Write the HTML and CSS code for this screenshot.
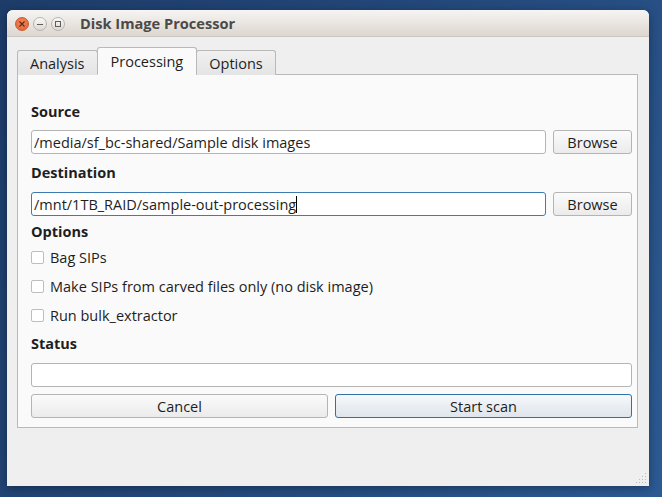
FILE: index.html
```html
<!DOCTYPE html>
<html>
<head>
<meta charset="utf-8">
<link rel="stylesheet" href="styles.css">
</head>
<body>
<div class="window">
  <div class="titlebar">
    <div class="wbtns">
      <span class="wbtn close"><svg width="14" height="14" viewBox="0 0 14 14"><path d="M4.5 4.5 L9.5 9.5 M9.5 4.5 L4.5 9.5" stroke="#5a2a18" stroke-width="1.2" fill="none"/></svg></span>
      <span class="wbtn"><svg width="14" height="14" viewBox="0 0 14 14"><path d="M4 7.5 H10" stroke="#5d5d5d" stroke-width="1" fill="none"/></svg></span>
      <span class="wbtn"><svg width="14" height="14" viewBox="0 0 14 14"><rect x="4.5" y="4.5" width="5" height="5" stroke="#5d5d5d" stroke-width="1" fill="none"/></svg></span>
    </div>
    <div class="title">Disk Image Processor</div>
  </div>
  <div class="body">
    <div class="tabs">
      <div class="tab">Analysis</div>
      <div class="tab active">Processing</div>
      <div class="tab">Options</div>
    </div>
    <div class="pane">
      <div class="label">Source</div>
      <div class="row">
        <div class="field">/media/sf_bc-shared/Sample disk images</div>
        <div class="btn browse">Browse</div>
      </div>
      <div class="label l2">Destination</div>
      <div class="row r2">
        <div class="field focus">/mnt/1TB_RAID/sample-out-processing<span class="caret"></span></div>
        <div class="btn browse">Browse</div>
      </div>
      <div class="label l3">Options</div>
      <div class="check"><span class="box"></span>Bag SIPs</div>
      <div class="check"><span class="box"></span>Make SIPs from carved files only (no disk image)</div>
      <div class="check"><span class="box"></span>Run bulk_extractor</div>
      <div class="label l4">Status</div>
      <div class="field status"></div>
      <div class="btnrow">
        <div class="btn">Cancel</div>
        <div class="btn primary">Start scan</div>
      </div>
    </div>
    <div class="grip">
      <svg width="10" height="10" viewBox="0 0 10 10" fill="#b9b9b9">
        <rect x="9" y="0" width="1" height="1"/>
        <rect x="6" y="3" width="1" height="1"/><rect x="9" y="3" width="1" height="1"/>
        <rect x="3" y="6" width="1" height="1"/><rect x="6" y="6" width="1" height="1"/><rect x="9" y="6" width="1" height="1"/>
        <rect x="0" y="9" width="1" height="1"/><rect x="3" y="9" width="1" height="1"/><rect x="6" y="9" width="1" height="1"/><rect x="9" y="9" width="1" height="1"/>
      </svg>
    </div>
  </div>
</div>
</body>
</html>
```
FILE: styles.css
```css
html, body {
  margin: 0;
  padding: 0;
  height: 100%;
}
body {
  background: linear-gradient(120deg, #1d3c69 0%, #24497c 50%, #2c5a93 100%);
  font-family: "Open Sans", "DejaVu Sans", sans-serif;
  font-size: 14.5px;
  color: #1e1e1e;
  overflow: hidden;
}
.window {
  margin: 10px 0 0 7px;
  width: 642px;
  height: 476px;
  display: flex;
  flex-direction: column;
  border-radius: 6px 6px 0 0;
  box-shadow: 0 2px 10px rgba(0,0,0,0.35);
  background: #efefef;
}
.titlebar {
  height: 27px;
  flex: none;
  display: flex;
  align-items: center;
  border-radius: 6px 6px 0 0;
  background: linear-gradient(#f6f5f3, #ddd6d0);
  border-bottom: 1px solid #cfc8c2;
  box-sizing: border-box;
}
.wbtns {
  display: flex;
  gap: 4px;
  padding-left: 8px;
  padding-top: 1px;
}
.wbtn {
  width: 14px;
  height: 14px;
  border-radius: 50%;
  box-sizing: border-box;
  border: 1px solid #b8b3ae;
  background: linear-gradient(#fbfaf9, #dcd7d2);
  display: flex;
}
.wbtn svg { display: block; margin: -1px; }
.wbtn.close {
  border-color: #c85a36;
  background: radial-gradient(circle at 50% 40%, #f68a5c, #e45c2e);
}
.title {
  margin-left: 15px;
  font-weight: bold;
  font-size: 14.6px;
  color: #4c4a48;
}
.body {
  flex: 1;
  display: flex;
  flex-direction: column;
  padding: 11px 11px 0 10px;
  position: relative;
}
.tabs {
  display: flex;
  align-items: flex-end;
  height: 27px;
  margin-bottom: -1px;
  position: relative;
  z-index: 1;
}
.tab {
  height: 25px;
  box-sizing: border-box;
  border: 1px solid #b9b9b9;
  border-bottom: none;
  border-radius: 3px 3px 0 0;
  background: linear-gradient(#f0f0f0, #e4e4e4);
  display: flex;
  align-items: center;
  padding: 0 12px;
  color: #1e1e1e;
}
.tab + .tab { margin-left: -1px; }
.tab.active {
  height: 28px;
  background: #fafafa;
  padding: 0 13px;
  border-bottom: 1px solid #fafafa;
}
.pane {
  height: 354px;
  box-sizing: border-box;
  border: 1px solid #b9b9b9;
  background: #fafafa;
  padding: 27px 5px 0 13px;
  display: flex;
  flex-direction: column;
}
.label {
  height: 20px;
  line-height: 20px;
  font-weight: bold;
}
.l2 { margin-top: 9px; }
.l3 { margin-top: 6px; }
.l4 { margin-top: 5px; }
.row {
  display: flex;
  gap: 7px;
  margin-top: 8px;
}
.r2 { margin-top: 9px; }
.field {
  flex: 1;
  height: 24px;
  box-sizing: border-box;
  border: 1px solid #b4b4b4;
  border-radius: 3px;
  background: #ffffff;
  padding: 1px 2px 0;
  line-height: 22px;
  white-space: nowrap;
}
.field.focus { border-color: #3d7cb0; }
.caret {
  display: inline-block;
  width: 1px;
  height: 17px;
  background: #000;
  vertical-align: -3px;
}
.field.status { flex: none; margin-top: 9px; }
.btn {
  height: 24px;
  box-sizing: border-box;
  border: 1px solid #b4b4b4;
  border-radius: 3px;
  background: linear-gradient(#fbfbfb, #ebebeb);
  display: flex;
  align-items: center;
  justify-content: center;
}
.browse { width: 79px; flex: none; }
.check {
  height: 29px;
  display: flex;
  align-items: center;
  padding-top: 1px;
  box-sizing: border-box;
}
.box {
  width: 13px;
  height: 13px;
  box-sizing: border-box;
  border: 1px solid #bdbdbd;
  border-radius: 2px;
  background: #fff;
  margin-right: 6px;
}
.btnrow {
  display: flex;
  gap: 7px;
  margin-top: 7px;
}
.btnrow .btn { flex: 1; }
.btn.primary {
  border-color: #2f70a6;
  background: linear-gradient(#f6f8fb, #dfe5eb);
}
.grip {
  position: absolute;
  right: 3px;
  bottom: 3px;
  line-height: 0;
}
```
